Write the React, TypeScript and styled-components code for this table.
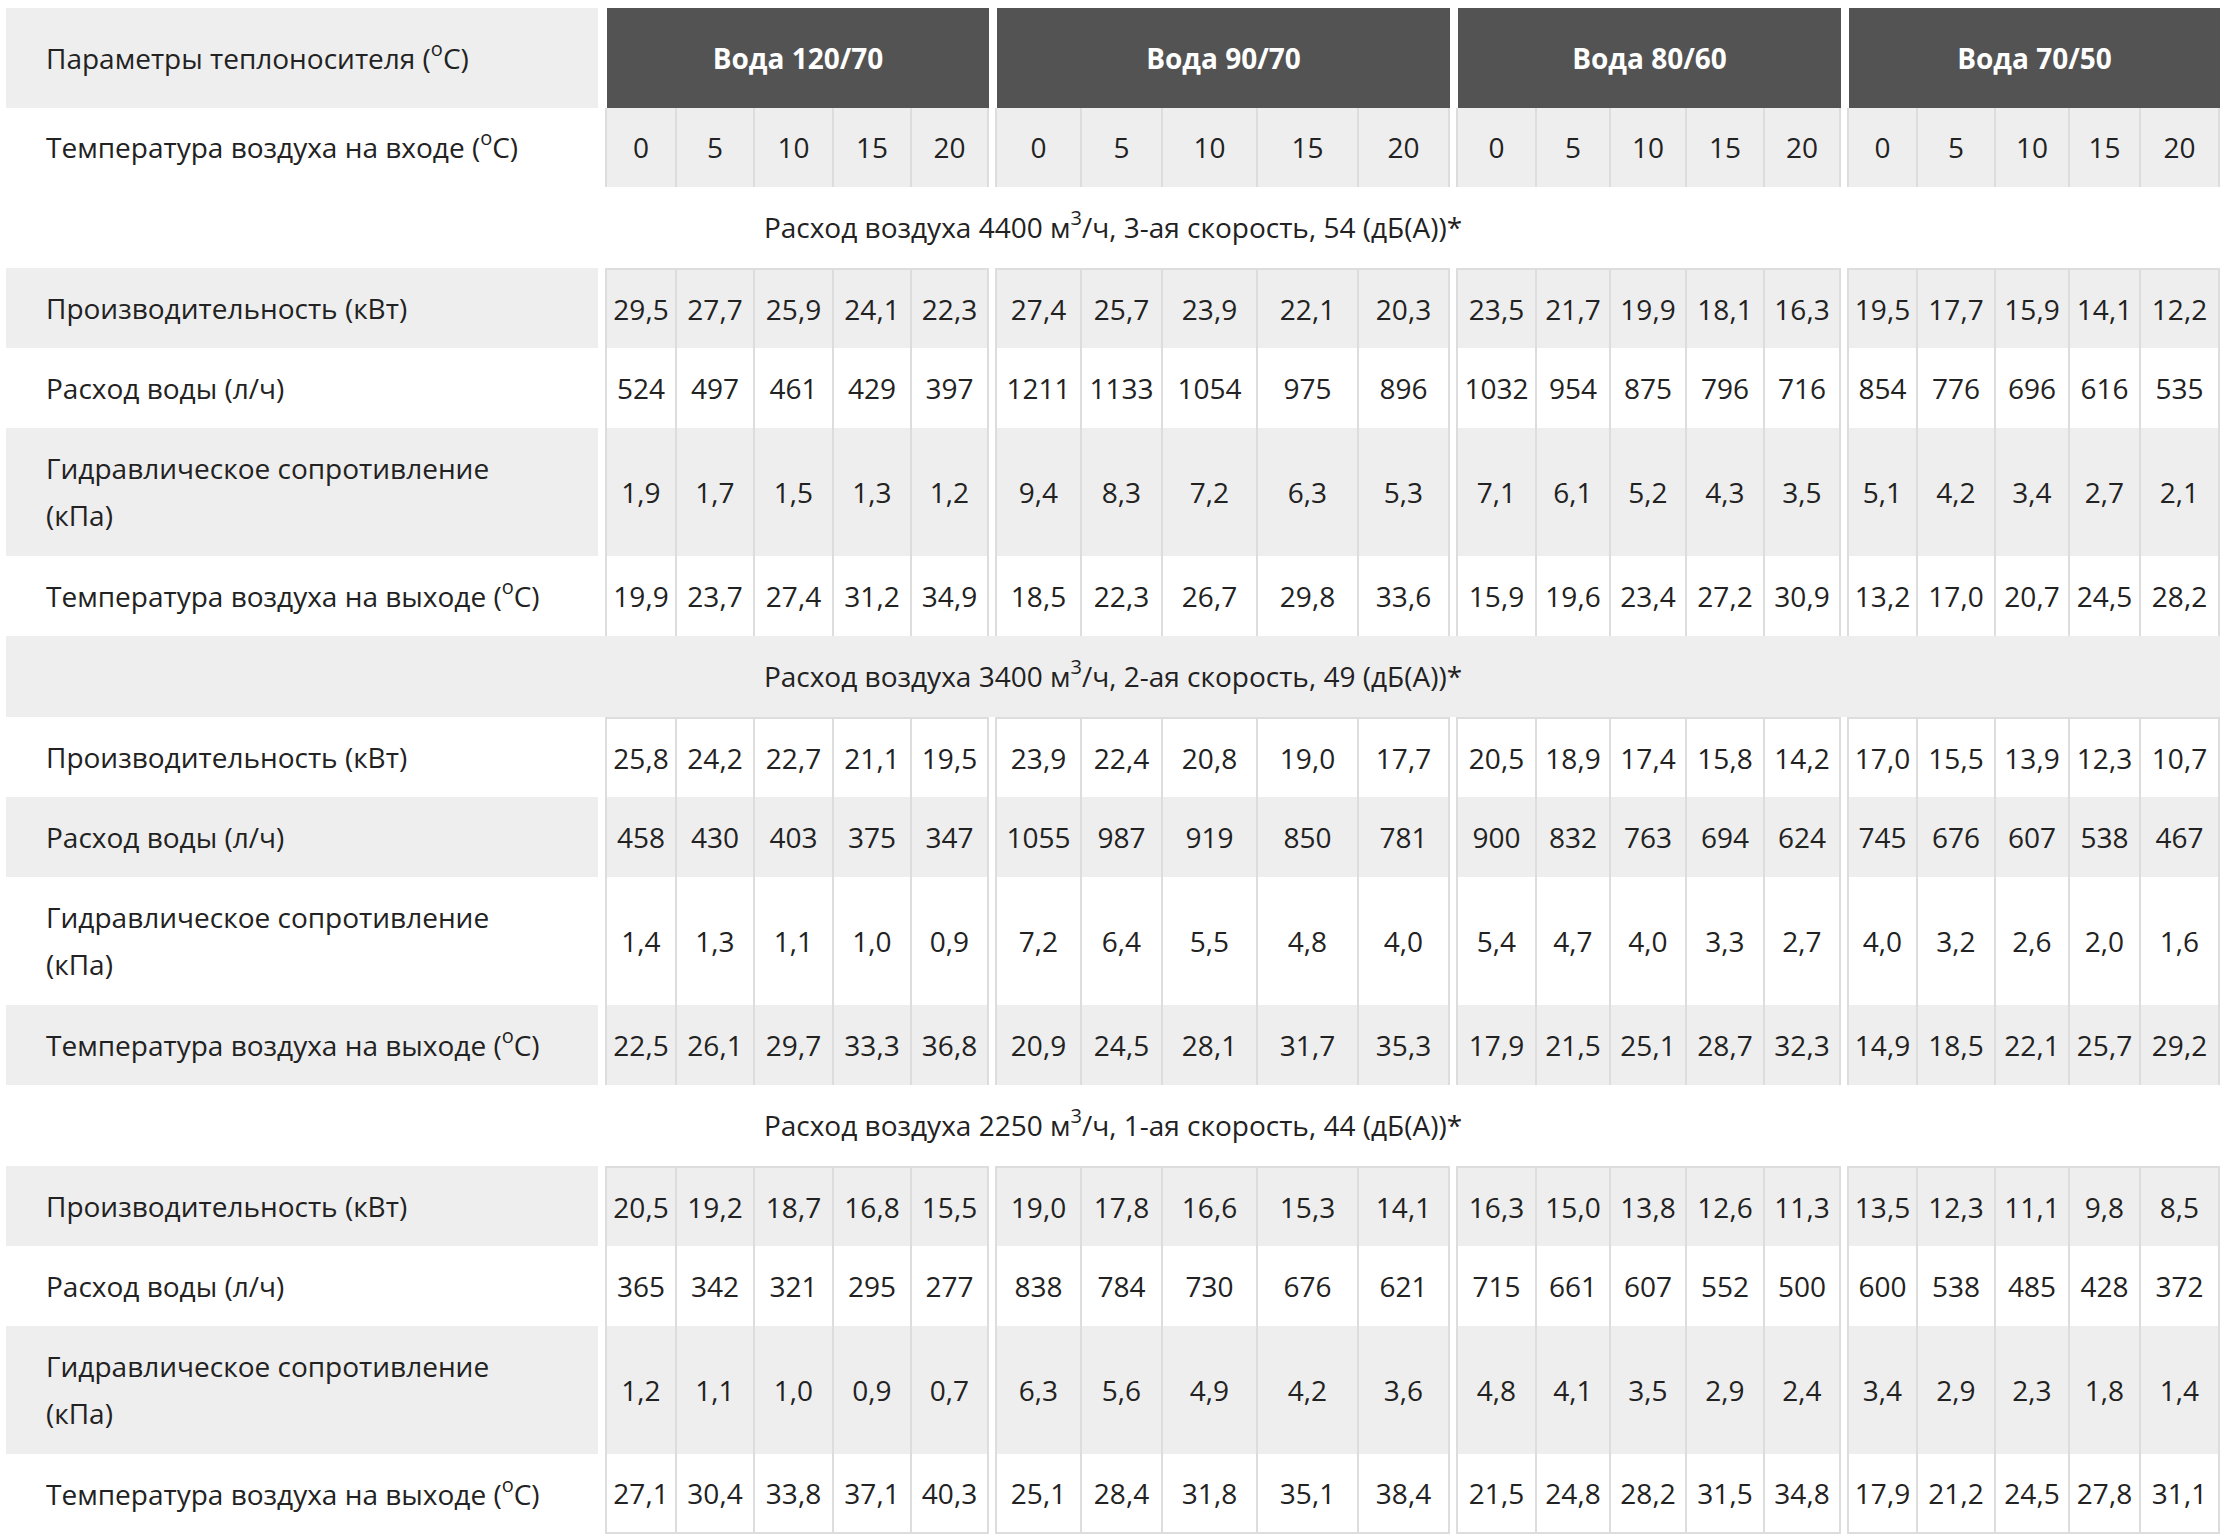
import React from 'react';
import styled, {createGlobalStyle} from 'styled-components';

const GlobalStyle = createGlobalStyle`
  body {
    margin: 0;
    background: #fff;
    font-family: "Open Sans", "Noto Sans", "Liberation Sans", sans-serif;
    color: #222;
  }
`

const GRAY = '#eeeeee'
const LINE = '#dddddd'
const DARK = '#535353'

// column widths taken from the reference, spacer columns between groups
const groupWidths = [
    [72, 78, 79, 78, 77],
    [87, 81, 95, 101, 91],
    [81, 74, 76, 78, 76],
    [71, 78, 74, 71, 79],
]
const LABEL_W = 592
const SPACER_W = [7, 6, 6, 6]

const Table = styled.table`
  table-layout: fixed;
  border-collapse: separate;
  border-spacing: 0;
  margin: 8px 0 0 6px;
  font-size: 28px;
  line-height: 47px;

  td, th {
    box-sizing: border-box;
    vertical-align: middle;
  }

  sup {
    font-size: 20px;
    line-height: 0;
    vertical-align: 13px;
  }
`

const Row = styled.tr<{ $gray?: boolean; $h: number }>`
  height: ${p => p.$h}px;
  background: ${p => p.$gray ? GRAY : '#fff'};
`

const LabelCell = styled.td<{ $gray?: boolean }>`
  padding: 0 20px 0 40px;
  text-align: left;
  white-space: nowrap;
  background: ${p => p.$gray ? GRAY : 'transparent'};
`

const Spacer = styled.td`
  background: #fff;
  padding: 0;
`

const HeadLabel = styled(LabelCell)`
  background: ${GRAY};
  font-weight: 400;
`

const GroupHead = styled.th`
  background: ${DARK};
  color: #fff;
  font-weight: 700;
  text-align: center;
  padding: 0;
  border-left: 2px solid #fff;
`

const ValueCell = styled.td<{ $first?: boolean; $top?: boolean; $bottom?: boolean; $fill?: boolean }>`
  padding: 0;
  text-align: center;
  white-space: nowrap;
  border-right: 2px solid ${LINE};
  border-left: ${p => p.$first ? `2px solid ${LINE}` : 'none'};
  border-top: ${p => p.$top ? `2px solid ${LINE}` : 'none'};
  border-bottom: ${p => p.$bottom ? `2px solid ${LINE}` : 'none'};
  background: ${p => p.$fill ? GRAY : 'transparent'};
`

const SectionCell = styled.td`
  text-align: center;
  padding: 0;
`

const groups = ['Вода 120/70', 'Вода 90/70', 'Вода 80/60', 'Вода 70/50']
const inletTemps = ['0', '5', '10', '15', '20']

type Block = {
    flow: string
    speed: string
    noise: string
    rows: string[][]
}

const blocks: Block[] = [
    {
        flow: '4400', speed: '3-ая', noise: '54',
        rows: [
            '29,5 27,7 25,9 24,1 22,3 27,4 25,7 23,9 22,1 20,3 23,5 21,7 19,9 18,1 16,3 19,5 17,7 15,9 14,1 12,2'.split(' '),
            '524 497 461 429 397 1211 1133 1054 975 896 1032 954 875 796 716 854 776 696 616 535'.split(' '),
            '1,9 1,7 1,5 1,3 1,2 9,4 8,3 7,2 6,3 5,3 7,1 6,1 5,2 4,3 3,5 5,1 4,2 3,4 2,7 2,1'.split(' '),
            '19,9 23,7 27,4 31,2 34,9 18,5 22,3 26,7 29,8 33,6 15,9 19,6 23,4 27,2 30,9 13,2 17,0 20,7 24,5 28,2'.split(' '),
        ],
    },
    {
        flow: '3400', speed: '2-ая', noise: '49',
        rows: [
            '25,8 24,2 22,7 21,1 19,5 23,9 22,4 20,8 19,0 17,7 20,5 18,9 17,4 15,8 14,2 17,0 15,5 13,9 12,3 10,7'.split(' '),
            '458 430 403 375 347 1055 987 919 850 781 900 832 763 694 624 745 676 607 538 467'.split(' '),
            '1,4 1,3 1,1 1,0 0,9 7,2 6,4 5,5 4,8 4,0 5,4 4,7 4,0 3,3 2,7 4,0 3,2 2,6 2,0 1,6'.split(' '),
            '22,5 26,1 29,7 33,3 36,8 20,9 24,5 28,1 31,7 35,3 17,9 21,5 25,1 28,7 32,3 14,9 18,5 22,1 25,7 29,2'.split(' '),
        ],
    },
    {
        flow: '2250', speed: '1-ая', noise: '44',
        rows: [
            '20,5 19,2 18,7 16,8 15,5 19,0 17,8 16,6 15,3 14,1 16,3 15,0 13,8 12,6 11,3 13,5 12,3 11,1 9,8 8,5'.split(' '),
            '365 342 321 295 277 838 784 730 676 621 715 661 607 552 500 600 538 485 428 372'.split(' '),
            '1,2 1,1 1,0 0,9 0,7 6,3 5,6 4,9 4,2 3,6 4,8 4,1 3,5 2,9 2,4 3,4 2,9 2,3 1,8 1,4'.split(' '),
            '27,1 30,4 33,8 37,1 40,3 25,1 28,4 31,8 35,1 38,4 21,5 24,8 28,2 31,5 34,8 17,9 21,2 24,5 27,8 31,1'.split(' '),
        ],
    },
]

const deg = <>(<sup>o</sup>C)</>

const rowLabels: React.ReactNode[] = [
    'Производительность (кВт)',
    'Расход воды (л/ч)',
    <>Гидравлическое сопротивление<br/>(кПа)</>,
    <>Температура воздуха на выходе {deg}</>,
]
const rowHeights = [80, 80, 128, 80]

const COLS = 1 + 4 + 20

function ValueGroups({values, top, bottom, fill}: { values: string[], top?: boolean, bottom?: boolean, fill?: boolean }) {
    return (
        <>
            {groups.map((g, gi) => (
                <React.Fragment key={g}>
                    <Spacer/>
                    {values.slice(gi * 5, gi * 5 + 5).map((v, i) => (
                        <ValueCell key={i} $first={i === 0} $top={top} $bottom={bottom} $fill={fill}>
                            {v}
                        </ValueCell>
                    ))}
                </React.Fragment>
            ))}
        </>
    )
}

export default function App() {
    let stripe = 0
    const body: React.ReactNode[] = []
    blocks.forEach((b, bi) => {
        stripe++
        body.push(
            <Row key={`s${bi}`} $h={81} $gray={stripe % 2 === 0}>
                <SectionCell colSpan={COLS}>
                    Расход воздуха {b.flow} м<sup>3</sup>/ч, {b.speed} скорость, {b.noise} (дБ(А))*
                </SectionCell>
            </Row>
        )
        b.rows.forEach((values, ri) => {
            stripe++
            const gray = stripe % 2 === 0
            body.push(
                <Row key={`r${bi}-${ri}`} $h={rowHeights[ri]} $gray={gray}>
                    <LabelCell $gray={gray}>{rowLabels[ri]}</LabelCell>
                    <ValueGroups values={values} top={ri === 0}
                                 bottom={bi === blocks.length - 1 && ri === b.rows.length - 1}/>
                </Row>
            )
        })
    })

    return (
        <>
            <GlobalStyle/>
            <Table>
                <colgroup>
                    <col style={{width: LABEL_W}}/>
                    {groupWidths.map((ws, gi) => (
                        <React.Fragment key={gi}>
                            <col style={{width: SPACER_W[gi]}}/>
                            {ws.map((w, i) => <col key={i} style={{width: w}}/>)}
                        </React.Fragment>
                    ))}
                </colgroup>
                <thead>
                <Row $h={100}>
                    <HeadLabel as="th">Параметры теплоносителя {deg}</HeadLabel>
                    {groups.map(g => (
                        <React.Fragment key={g}>
                            <Spacer/>
                            <GroupHead colSpan={5}>{g}</GroupHead>
                        </React.Fragment>
                    ))}
                </Row>
                <Row $h={79}>
                    <LabelCell>Температура воздуха на входе {deg}</LabelCell>
                    <ValueGroups values={[...inletTemps, ...inletTemps, ...inletTemps, ...inletTemps]} fill/>
                </Row>
                </thead>
                <tbody>
                {body}
                </tbody>
            </Table>
        </>
    )
}
